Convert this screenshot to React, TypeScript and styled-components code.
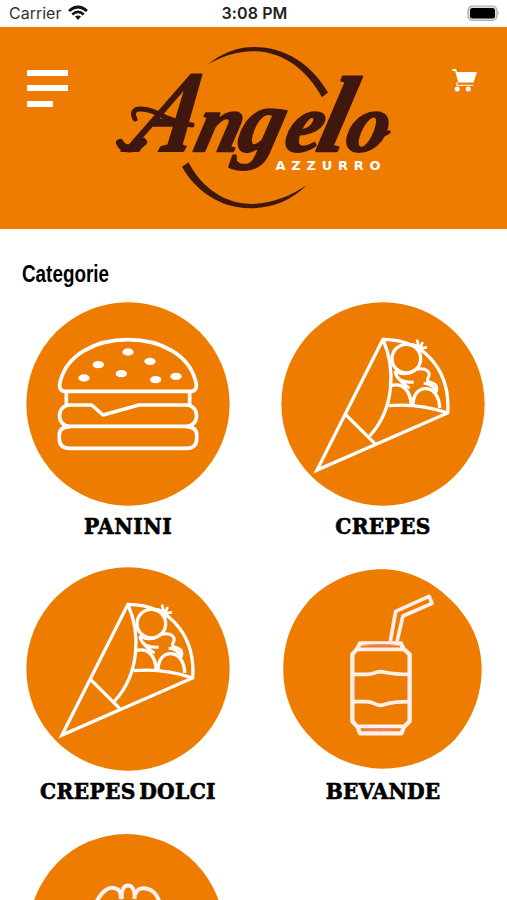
import React from "react";
import styled, { createGlobalStyle } from "styled-components";

const ORANGE = "#ee7c00";
const BROWN = "#40170f";

const GlobalStyle = createGlobalStyle`
  * { box-sizing: border-box; }
  body { margin: 0; background: #fff; }
`;

const Screen = styled.div`
  width: 507px;
  height: 900px;
  overflow: hidden;
  background: #fff;
  color: #000;
`;

const StatusBar = styled.div`
  display: grid;
  grid-template-columns: 1fr auto 1fr;
  align-items: center;
  height: 27px;
  padding: 0 7px 1px 9px;
  font: 400 16px/26px Inter, sans-serif;
  color: #222;
`;

const Carrier = styled.div`
  display: flex;
  align-items: center;
  gap: 7px;
  color: #333;
`;

const Clock = styled.div`
  font-weight: 600;
  letter-spacing: 0.1px;
`;

const Battery = styled.div`
  display: flex;
  justify-content: flex-end;
`;

const Header = styled.header`
  display: flex;
  justify-content: space-between;
  align-items: flex-start;
  height: 202px;
  padding: 8px 29px 0 27px;
  background: ${ORANGE};
`;

const MenuButton = styled.button`
  display: flex;
  flex-direction: column;
  gap: 9.5px;
  width: 42px;
  margin: 34.5px 0 0;
  padding: 0;
  border: 0;
  background: none;
`;

const MenuBar = styled.span<{ $width: number }>`
  width: ${(p) => p.$width}px;
  height: 6px;
  background: #fff;
`;

const LogoSvg = styled.svg`
  width: 300px;
  height: 185px;
  margin-right: 12px;
`;

const CartButton = styled.button`
  margin: 33px 0 0;
  padding: 0;
  border: 0;
  background: none;
  line-height: 0;
`;

const Title = styled.h1`
  margin: 0;
  padding: 31px 0 0 22px;
  height: 73px;
  font: 700 23px/28px "Liberation Sans Narrow", "Arial Narrow", "Liberation Sans", sans-serif;
`;

const TitleText = styled.span`
  display: inline-block;
  transform: scaleX(0.82);
  transform-origin: left;
`;

const Grid = styled.main`
  display: grid;
  grid-template-columns: 204px 204px;
  column-gap: 51px;
  grid-auto-rows: 265px;
  padding-left: 26px;
`;

const Card = styled.section`
  display: flex;
  flex-direction: column;
  align-items: center;
`;

const Picture = styled.svg`
  width: 204px;
  height: 204px;
  flex: none;
  overflow: visible;
`;

const Label = styled.h2<{ $spacing: number }>`
  margin: 7px 0 0;
  font: 700 22.5px/26px "DejaVu Serif Condensed", "DejaVu Serif", serif;
  font-stretch: condensed;
  letter-spacing: ${(p) => p.$spacing}px;
  word-spacing: -4px;
  white-space: nowrap;
  -webkit-text-stroke: 0.6px #000;
`;

const WifiIcon = () => (
  <svg width="20" height="16" viewBox="0 0 20 16" fill="none" stroke="#111" strokeWidth="2.7">
    <path d="M1 6 Q10 -2 19 6" />
    <path d="M4.3 9.5 Q10 4.4 15.7 9.5" />
    <path d="M7 11.6 Q10 9.4 13 11.6 L10 15Z" fill="#111" stroke="none" />
  </svg>
);

const BatteryIcon = () => (
  <svg width="33" height="17" viewBox="0 0 33 17">
    <rect x="1" y="1" width="29" height="14.5" rx="4.5" fill="#ddd" stroke="#aaa" strokeWidth="1.2" />
    <rect x="3" y="3" width="25" height="10.5" rx="2.5" fill="#000" />
    <path d="M31.2 6 Q33 8 31.2 10Z" fill="#aaa" />
  </svg>
);

const CartIcon = () => (
  <svg width="26" height="24" viewBox="0 0 26 24" fill="#fff">
    <path d="M.5 1 H4 L5.2 4 H25 L21.5 14.5 H6.2 L3.2 3 H.5Z" />
    <path d="M5 14 V17.3 H21" fill="none" stroke="#fff" strokeWidth="1.3" opacity=".8" />
    <circle cx="5.2" cy="21" r="2.5" />
    <circle cx="16.2" cy="21" r="2.5" />
  </svg>
);

const Logo = () => (
  <LogoSvg viewBox="105 35 300 185">
    <g fill={BROWN}>
      <path d="M208 64.6 C221 53 238 47 254 47 C286 47 312 65 328 92.5 L322 97.3 C307 70 284 52 255 51.3 C238 51 222 56 208 64.6Z" />
      <path d="M182 166.8 L188.5 162.2 C202 188 225 204 253 204 C273 203 291 196 306.8 185 C291 201 271 208.3 250 208.3 C219 208 195 190 182 166.8Z" />
      <g
        fontFamily="Liberation Serif"
        fontWeight="700"
        fontStyle="italic"
        stroke={BROWN}
        strokeLinejoin="round"
      >
        <text transform="translate(126 151) skewX(-24) scale(.8 1)" fontSize="116" strokeWidth="2">
          A
        </text>
        <text transform="translate(2 151) skewX(-14)" strokeWidth="2.4">
          <tspan x="190" fontSize="82">n</tspan>
          <tspan x="233" fontSize="88">g</tspan>
          <tspan x="280" fontSize="82">e</tspan>
          <tspan x="312" fontSize="107">l</tspan>
          <tspan x="341" fontSize="82">o</tspan>
        </text>
      </g>
      <g fill="none" stroke={BROWN} strokeLinecap="round">
        <path d="M135 119 C128 105 147 107 165 117 C175 121 184 124 192 125" strokeWidth="5" />
        <path d="M120 143 C124 151 135 150 143 142" strokeWidth="8" />
        <path d="M374 136 Q383 136 389 132" strokeWidth="3.5" />
      </g>
    </g>
    <text
      x="275.5"
      y="170"
      fill="#fff"
      fontFamily="DejaVu Sans, sans-serif"
      fontWeight="700"
      fontSize="13"
      textLength="105"
    >
      AZZURRO
    </text>
  </LogoSvg>
);

const seeds = [
  [325, 156],
  [391, 184],
  [236, 194],
  [305, 221],
  [193, 234],
  [408, 239],
  [469, 229],
];

const Burger = () => (
  <Picture viewBox="19 6 612 612">
    <circle cx="325" cy="312" r="305" fill={ORANGE} />
    <g fill="none" stroke="#fff" strokeWidth="11" strokeLinejoin="round">
      <path d="M138 274 C119 274 117 259 123 240 C143 166 224 119 325 119 C426 119 507 166 527 240 C533 259 531 274 512 274Z" />
      <path d="M140 275 V315 M510 275 V315" />
      <path d="M151 315 H216 L250 345 L358 315 H500 C541 315 541 379 500 379 H151 C109 379 109 315 151 315Z" />
      <path d="M151 380 Q119 380 119 405 V418 Q120 445 151 445 H500 Q531 445 531 418 V405 Q531 380 500 380" />
    </g>
    <g fill="#fff">
      {seeds.map(([x, y]) => (
        <ellipse key={x} cx={x} cy={y} rx="17" ry="11" />
      ))}
    </g>
  </Picture>
);

const Crepe = () => (
  <Picture viewBox="19 6 612 612">
    <circle cx="325" cy="312" r="305" fill={ORANGE} />
    <g fill="none" stroke="#fff" strokeWidth="10">
      <path d="M325 118 L127 510 L519 339 C527 228 466 119 325 118Z" />
      <path d="M325 118 C363 206 360 326 285 408" />
      <path d="M213 344 L300 430" />
      <path d="M342 317 Q432 309 519 339" />
      <circle cx="395" cy="176" r="43" />
      <path d="M427 119 L432 140 L412 132 M444 126 L436 145 L457 142 M426 139 L450 157" strokeWidth="8" />
      <path d="M350 256 C385 249 407 270 410 317" />
      <path d="M415 315 C415 248 494 248 495 324" />
      <path d="M360 213 C367 239 382 249 417 246 M360 213 Q389 229 412 215 M370 232 Q381 252 405 264" strokeWidth="9" />
      <path d="M424 208 C457 202 471 217 459 236 C454 253 482 241 486 261 Q488 273 482 277 M447 250 Q470 251 482 270" strokeWidth="9" />
    </g>
  </Picture>
);

const Can = () => (
  <Picture viewBox="19 6 612 612">
    <path
      d="M323 13 C390 13 461 42 515 92 C583 151 622 229 621 312 C621 393 591 467 540 524 C482 583 401 611 324 611 C237 610 158 575 105 514 C55 461 25 392 26 312 C26 226 55 160 107 102 C169 44 243 13 323 13Z"
      fill={ORANGE}
    />
    <g fill="none" stroke="#fff0ed" strokeWidth="13" strokeLinejoin="round">
      <path d="M256 235 L248 251 L233 268 V469 L249 486 L256 505 H380 L388 486 L405 469 V268 L386 251 L379 235Z" />
      <path d="M248 253 H389 M249 484 H388" strokeWidth="11" />
      <path d="M347 229 L363 139 L463 94 L472 115 L385 153 L367 229" strokeWidth="11" />
      <path d="M235 328 H277 C297 328 301 320 319 320 C338 322 345 328 403 328" strokeWidth="11" />
      <path d="M235 410 H275 C298 410 300 421 319 421 C339 417 342 410 403 410" strokeWidth="11" />
      <path d="M239 335 V403" stroke="#f8b2a5" strokeWidth="4" />
    </g>
    <path d="M262 239 Q319 234 373 240 Q319 249 262 239Z M260 493 Q319 487 374 493 Q319 504 260 493Z" fill="#ea806d" />
  </Picture>
);

const Fries = () => (
  <Picture viewBox="19 6 612 612">
    <ellipse cx="320" cy="312" rx="294" ry="300" fill={ORANGE} />
    <path
      d="M232 212 C247 184 267 170 282 174 C298 175 305 188 303 207 M307 207 C298 153 352 153 344 207 M347 194 C353 164 403 168 418 212"
      fill="none"
      stroke="#fff1ed"
      strokeWidth="12"
    />
  </Picture>
);

const categories = [
  { name: "PANINI", Art: Burger, spacing: 0.5 },
  { name: "CREPES", Art: Crepe, spacing: 0.3 },
  { name: "CREPES DOLCI", Art: Crepe, spacing: 0.35 },
  { name: "BEVANDE", Art: Can, spacing: 0.1 },
  { name: "", Art: Fries, spacing: 0 },
];

export default function App() {
  return (
    <Screen>
      <GlobalStyle />
      <StatusBar>
        <Carrier>
          Carrier
          <WifiIcon />
        </Carrier>
        <Clock>3:08 PM</Clock>
        <Battery>
          <BatteryIcon />
        </Battery>
      </StatusBar>
      <Header>
        <MenuButton aria-label="Menu">
          <MenuBar $width={41} />
          <MenuBar $width={41} />
          <MenuBar $width={26} />
        </MenuButton>
        <Logo />
        <CartButton aria-label="Carrello">
          <CartIcon />
        </CartButton>
      </Header>
      <Title>
        <TitleText>Categorie</TitleText>
      </Title>
      <Grid>
        {categories.map(({ name, Art, spacing }) => (
          <Card key={name}>
            <Art />
            {name && <Label $spacing={spacing}>{name}</Label>}
          </Card>
        ))}
      </Grid>
    </Screen>
  );
}
